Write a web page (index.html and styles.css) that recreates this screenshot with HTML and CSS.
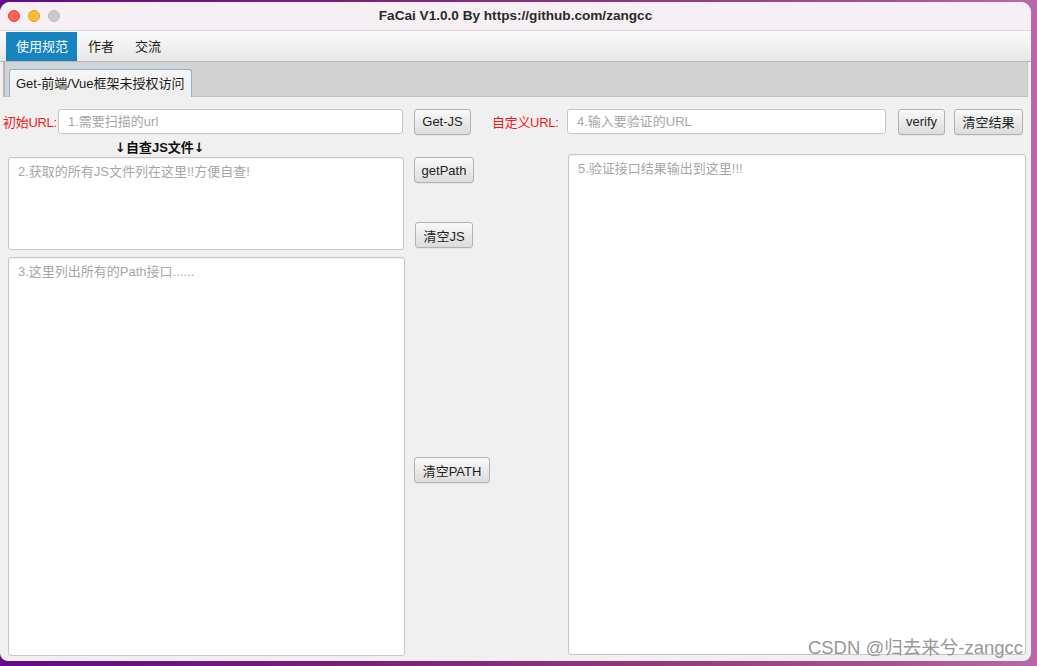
FILE: index.html
```
<!DOCTYPE html>
<html lang="zh-CN">
<head>
<meta charset="utf-8">
<title>FaCai V1.0.0</title>
<link rel="stylesheet" href="styles.css">
</head>
<body>
<div class="window">
  <div class="titlebar">
    <div class="lights">
      <span class="light red"></span>
      <span class="light yellow"></span>
      <span class="light grey"></span>
    </div>
    <div class="title">FaCai V1.0.0 By https://github.com/zangcc</div>
  </div>
  <div class="menubar">
    <div class="menu-item active">使用规范</div>
    <div class="menu-item">作者</div>
    <div class="menu-item">交流</div>
  </div>
  <div class="tabbar">
    <div class="tab">Get-前端/Vue框架未授权访问</div>
  </div>
  <div class="content">
    <div class="left">
      <div class="row">
        <span class="label">初始URL:</span>
        <input class="field field-init" type="text" placeholder="1.需要扫描的url">
        <button class="btn btn-getjs">Get-JS</button>
      </div>
      <div class="heading"><span class="arrow">↓</span>自查JS文件<span class="arrow">↓</span></div>
      <div class="pair">
        <textarea class="area area-js" placeholder="2.获取的所有JS文件列在这里!!方便自查!"></textarea>
        <div class="btncol">
          <button class="btn btn-getpath">getPath</button>
          <button class="btn btn-clearjs">清空JS</button>
        </div>
      </div>
      <div class="pair pair-path">
        <textarea class="area area-path" placeholder="3.这里列出所有的Path接口......"></textarea>
        <div class="btncol btncol-path">
          <button class="btn btn-clearpath">清空PATH</button>
        </div>
      </div>
    </div>
    <div class="right">
      <div class="row">
        <span class="label label-custom">自定义URL:</span>
        <input class="field field-custom" type="text" placeholder="4.输入要验证的URL">
        <button class="btn btn-verify">verify</button>
        <button class="btn btn-clearres">清空结果</button>
      </div>
      <textarea class="area area-result" placeholder="5.验证接口结果输出到这里!!!"></textarea>
    </div>
  </div>
  <div class="watermark">CSDN @归去来兮-zangcc</div>
</div>
</body>
</html>
```

FILE: styles.css
```
* { box-sizing: border-box; }

html, body {
  margin: 0;
  padding: 0;
  width: 1037px;
  height: 666px;
  overflow: hidden;
}

body {
  background: linear-gradient(to right, #650a8a 0%, #7a2078 35%, #963a7c 65%, #a8508e 85%, #b86aa8 100%);
  font-family: "Liberation Sans", "Noto Sans CJK SC", sans-serif;
  font-size: 13px;
  color: #222;
  padding-top: 2px;
}

.window {
  position: relative;
  width: 1031px;
  height: 659px;
  background: #f0f0f0;
  border-radius: 10px 10px 8px 8px;
  overflow: hidden;
  display: flex;
  flex-direction: column;
}

.titlebar {
  height: 29px;
  background: #f6eff4;
  border-bottom: 1px solid #dcd6da;
  display: flex;
  align-items: center;
  position: relative;
}

.lights {
  display: flex;
  gap: 8px;
  padding-left: 8px;
}

.light {
  width: 12px;
  height: 12px;
  border-radius: 50%;
  display: block;
}
.red { background: #fe5f57; border: 0.5px solid #e2463f; }
.yellow { background: #febc2e; border: 0.5px solid #e1a116; }
.grey { background: #cdc8cc; border: 0.5px solid #bdb8bc; }

.title {
  position: absolute;
  left: 0;
  right: 0;
  text-align: center;
  font-weight: bold;
  font-size: 13.6px;
  color: #2a2a2a;
  top: 6px;
}

.menubar {
  height: 31px;
  background: linear-gradient(#fbfbfb, #e7e7e7);
  border-bottom: 1px solid #b4b4b4;
  display: flex;
  padding-left: 6px;
  padding-top: 1px;
}

.menu-item {
  padding: 0 10px 0 11px;
  line-height: 29px;
  font-size: 13px;
  color: #1a1a1a;
}
.menu-item.active {
  background: #1784c1;
  color: #fff;
  padding: 0 9px 0 10px;
}

.tabbar {
  height: 35px;
  background: #d3d3d3;
  margin: 0 3px;
  border-left: 2px solid #b8b8b8;
  border-right: 1px solid #c4c4c4;
  border-bottom: 1px solid #c0c0c0;
  padding: 6px 0 0 4px;
  display: flex;
  align-items: flex-end;
}

.tab {
  height: 28px;
  padding: 0 6px 0 6px;
  line-height: 27px;
  background: linear-gradient(#f6f6f6, #eeeeee);
  border: 1px solid #86b6d6;
  border-bottom: none;
  border-radius: 3px 3px 0 0;
  font-size: 13px;
  color: #1a1a1a;
  margin-bottom: -1px;
}

.content {
  flex: 1;
  display: flex;
  padding: 12px 0 0 3px;
}

.left {
  width: 487px;
}

.right {
  flex: 1;
}

.row {
  display: flex;
  align-items: center;
  height: 25px;
}

.label {
  color: #f01818;
  font-size: 13px;
  width: 55px;
  white-space: nowrap;
  flex-shrink: 0;
  letter-spacing: -0.3px;
}
.label-custom {
  margin-left: 2px;
  width: 75px;
}

.field {
  height: 25px;
  background: #fff;
  border: 1px solid #c6c6c6;
  border-radius: 3px;
  font-family: inherit;
  font-size: 13px;
  padding: 0 9px;
  outline: none;
  flex-shrink: 0;
}
.field::placeholder { color: #a6a6a6; }
.field-init { width: 345px; }
.field-custom { width: 319px; }

.btn {
  height: 26px;
  background: linear-gradient(#f9f9f9, #dcdcdc);
  border: 1px solid #b2b2b2;
  border-radius: 3px;
  font-family: inherit;
  font-size: 13px;
  color: #1e1e1e;
  padding: 0;
  flex-shrink: 0;
  box-shadow: 0 1px 0 rgba(0,0,0,0.04);
}
.btn-getjs { width: 57px; margin-left: 11px; }
.btn-verify { width: 47px; margin-left: 12px; }
.btn-clearres { width: 69px; margin-left: 9px; }

.heading {
  font-weight: bold;
  font-size: 13px;
  line-height: 18px;
  padding-top: 5px;
  padding-left: 112px;
  height: 23px;
  color: #111;
  white-space: nowrap;
}
.arrow {
  font-family: "DejaVu Sans", sans-serif;
  font-size: 13px;
  font-weight: bold;
}

.pair {
  display: flex;
  margin-left: 5px;
}
.pair-path { margin-top: 7px; }

.btncol {
  display: flex;
  flex-direction: column;
  align-items: flex-start;
  margin-left: 10px;
}
.btncol-path { margin-left: 9px; }

.area {
  background: #fff;
  border: 1px solid #c6c6c6;
  border-radius: 3px;
  font-family: inherit;
  font-size: 13px;
  padding: 3px 9px;
  resize: none;
  outline: none;
  flex-shrink: 0;
  box-shadow: inset 0 1px 1px rgba(0,0,0,0.05);
}
.area::placeholder { color: #a6a6a6; }

.area-js { width: 396px; height: 93px; }
.area-path { width: 397px; height: 399px; }
.area-result { width: 458px; height: 501px; margin: 20px 0 0 78px; display: block; }

.btn-getpath { width: 60px; }
.btn-clearjs { width: 58px; margin-top: 39px; margin-left: 1px; }
.btn-clearpath { width: 76px; margin-top: 200px; }

.watermark {
  position: absolute;
  right: 8px;
  bottom: 2px;
  font-size: 18.5px;
  color: #979797;
  font-family: "Liberation Sans", "Noto Sans CJK SC", sans-serif;
}
```
